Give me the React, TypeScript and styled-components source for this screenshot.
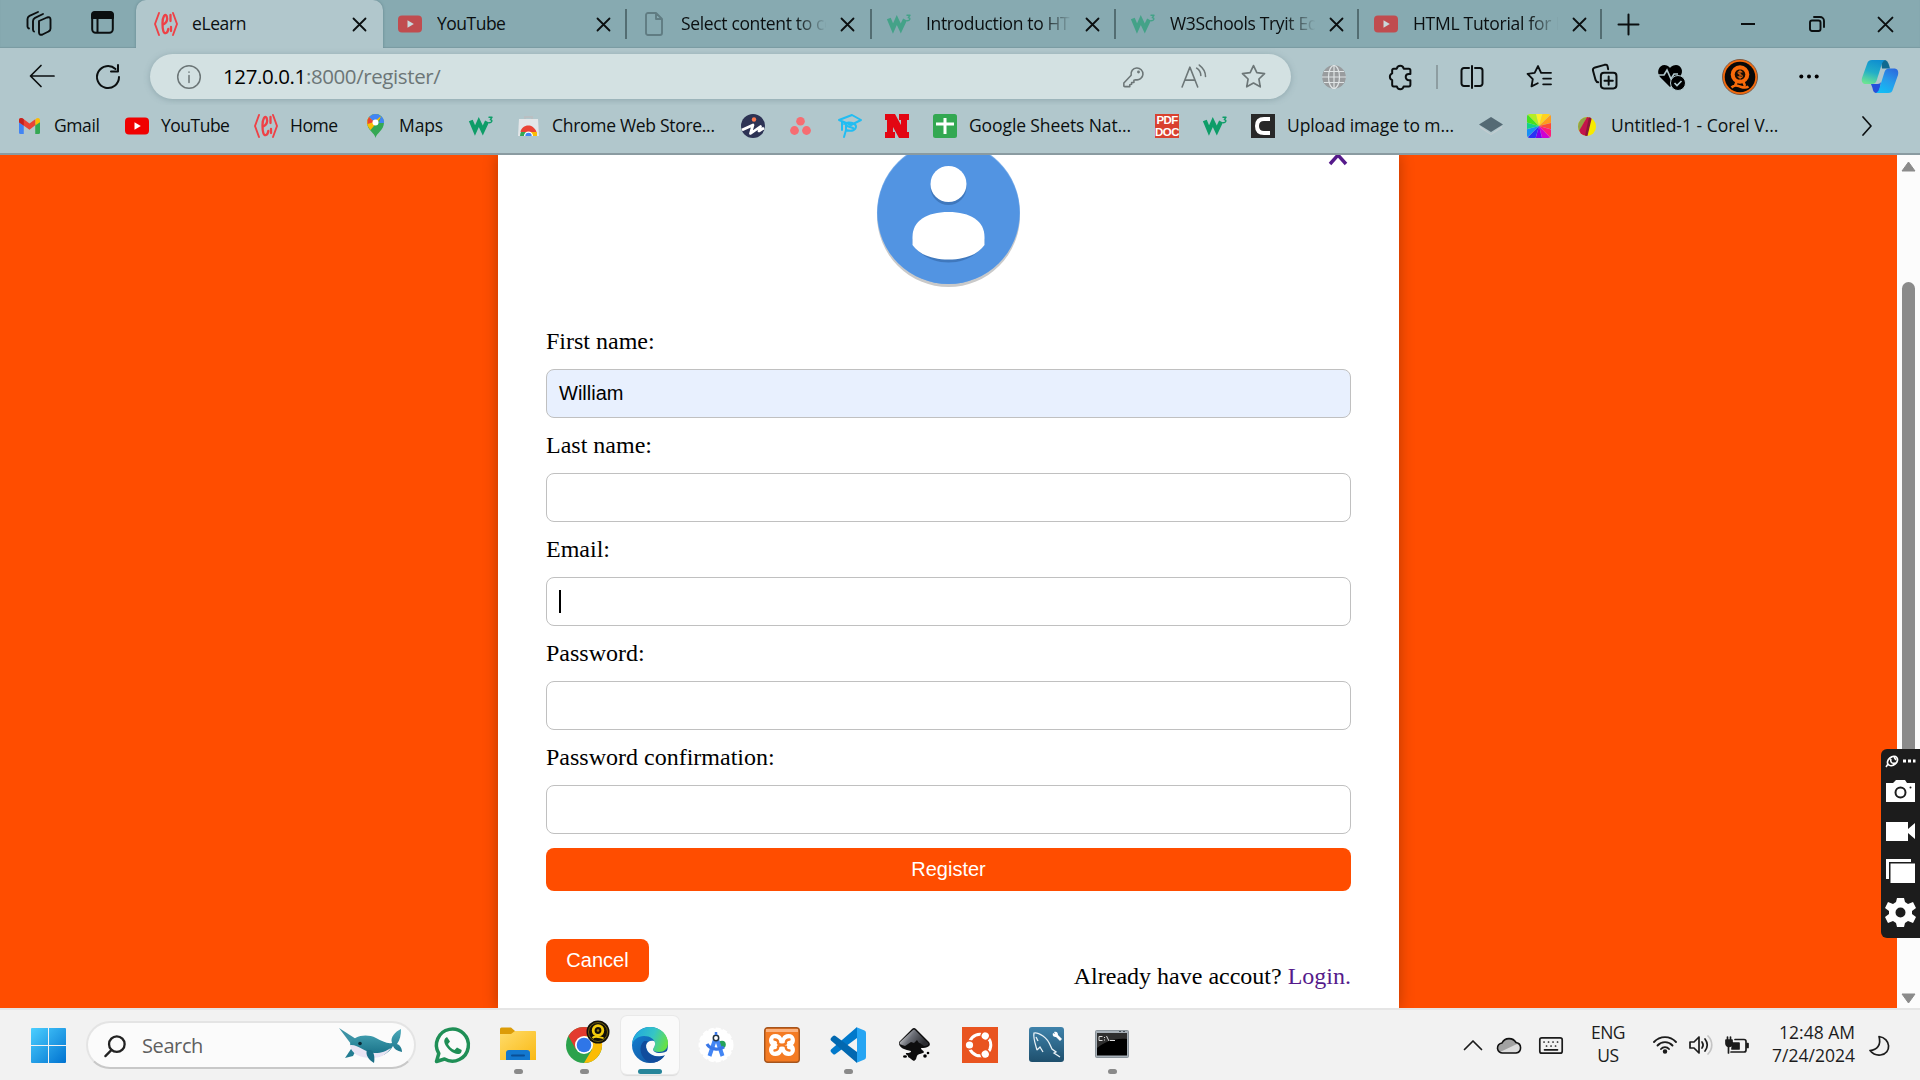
import React from 'react';
import styled, { createGlobalStyle } from 'styled-components';

const ui = '"Open Sans", "Noto Sans", sans-serif';

const GlobalStyle = createGlobalStyle`
  * { box-sizing: border-box; }
  body { margin: 0; background: #ff4d00; overflow: hidden; }
  svg { display: block; flex: none; overflow: visible; }
`;

const Screen = styled.div`
  width: 1920px;
  height: 1080px;
  display: flex;
  flex-direction: column;
  overflow: hidden;
  font-family: ${ui};
  color: #0b0f10;
`;

/* ---------- tab strip ---------- */
const TabStrip = styled.header`
  height: 48px;
  flex: none;
  display: flex;
  align-items: center;
  background: #87aab1;
  box-shadow: inset 0 -1px 1px #7b9ba2;
`;
const StripTools = styled.div`
  width: 136px;
  padding-left: 26px;
  display: flex;
  gap: 39px;
`;
const Tab = styled.div<{ $w: number; $active?: boolean }>`
  width: ${p => p.$w}px;
  height: 48px;
  display: flex;
  align-items: center;
  padding-left: ${p => (p.$active ? 18 : 15)}px;
  border-radius: 10px 10px 0 0;
  background: ${p => (p.$active ? '#b1c7cc' : 'transparent')};
  box-shadow: ${p => (p.$active ? '0 0 3px #62858d' : 'none')};
  clip-path: inset(-4px -4px 0 -4px);
`;
const TabIcon = styled.span<{ $dim?: boolean; $w?: number }>`
  width: ${p => p.$w ?? 39}px;
  flex: none;
  opacity: ${p => (p.$dim ? 0.55 : 1)};
`;
const TabTitle = styled.span<{ $w: number; $fade?: boolean; $ls?: number }>`
  width: ${p => p.$w}px;
  flex: none;
  overflow: hidden;
  white-space: nowrap;
  font-size: 17.5px;
  letter-spacing: ${p => p.$ls ?? -0.4}px;
  line-height: 28px;
  margin: -2px 13px 0 0;
  ${p => p.$fade && 'mask-image: linear-gradient(90deg, #000 78%, transparent 99%);'}
`;
const TabDivider = styled.i`
  width: 2px;
  height: 30px;
  margin-left: auto;
  background: #536d72;
`;
const WindowTools = styled.div`
  flex: 1;
  display: flex;
  align-items: center;
  padding: 0 27px 0 16px;
`;
const WindowButtons = styled.div`
  margin-left: auto;
  display: flex;
  align-items: center;
  gap: 53px;
`;

/* ---------- toolbar ---------- */
const Toolbar = styled.nav`
  height: 57px;
  flex: none;
  display: flex;
  align-items: center;
  background: #b1c7cc;
  padding: 0 16px 0 29px;
`;
const NavButtons = styled.div`
  width: 121px;
  flex: none;
  display: flex;
  gap: 40px;
`;
const AddressBar = styled.div`
  width: 1141px;
  flex: none;
  height: 45px;
  border-radius: 23px;
  background: #d3e1e2;
  box-shadow: 0 1px 6px rgba(80, 110, 118, 0.35);
  display: flex;
  align-items: center;
  padding: 0 25px 0 27px;
  color: #6c7677;
`;
const Url = styled.span`
  font-size: 20.5px;
  line-height: 28px;
  margin: -2px 0 0 22px;
  letter-spacing: -0.4px;
  b { font-weight: 400; color: #000; }
`;
const AddressTools = styled.div`
  margin-left: auto;
  display: flex;
  align-items: center;
  gap: 36px;
`;
const ToolSlots = styled.div`
  flex: 1;
  display: flex;
  align-items: center;
`;
const Slot = styled.span<{ $w: number }>`
  width: ${p => p.$w}px;
  flex: none;
  display: flex;
  justify-content: center;
`;
const ToolDivider = styled.i`
  width: 2px;
  height: 24px;
  background: #8d9da1;
`;

/* ---------- bookmarks ---------- */
const Bookmarks = styled.nav`
  height: 50px;
  flex: none;
  display: flex;
  align-items: center;
  padding: 0 0 6px 19px;
  background: #b1c7cc;
  border-bottom: 2px solid #8a9ba1;
`;
const Bookmark = styled.div<{ $w: number; $gap?: number }>`
  width: ${p => p.$w}px;
  flex: none;
  display: flex;
  align-items: center;
  gap: ${p => p.$gap ?? 12}px;
`;
const BookmarkText = styled.span<{ $ls?: number }>`
  font-size: 17.5px;
  line-height: 26px;
  margin-top: -2px;
  white-space: nowrap;
  letter-spacing: ${p => p.$ls ?? -0.2}px;
`;

/* ---------- web page ---------- */
const Viewport = styled.main`
  height: 853px;
  flex: none;
  display: flex;
  overflow: hidden;
  background: #ff4d00;
`;
const Backdrop = styled.div`
  width: 1897px;
  display: flex;
  justify-content: center;
`;
const Card = styled.section`
  width: 901px;
  height: 853px;
  padding: 0 48px;
  background: #fff;
  box-shadow: 0 0 14px rgba(0, 0, 0, 0.28);
  display: flex;
  flex-direction: column;
  font-family: "Liberation Serif", serif;
  font-size: 24px;
  color: #000;
`;
const CardTop = styled.div`
  height: 170px;
  display: grid;
  grid-template-columns: 1fr 143px 1fr;
`;
const CloseLink = styled.a`
  justify-self: end;
  margin-right: 3.5px;
`;
const Label = styled.label`
  height: 44px;
  line-height: 32px;
`;
const Field = styled.div<{ $filled?: boolean }>`
  height: 49px;
  margin-bottom: 11px;
  border: 1px solid #c0c0c0;
  border-radius: 8px;
  padding: 0 12px;
  display: flex;
  align-items: center;
  background: ${p => (p.$filled ? '#e8f0fe' : '#fff')};
  font-family: "Liberation Sans", sans-serif;
  font-size: 20px;
`;
const Caret = styled.i`
  width: 2px;
  height: 23px;
  background: #000;
`;
const Button = styled.button<{ $w: number; $top?: number }>`
  width: ${p => p.$w}px;
  height: 43px;
  margin: ${p => p.$top ?? 0}px 0 0;
  flex: none;
  border: 0;
  padding: 0;
  border-radius: 8px;
  background: #ff4d00;
  color: #fff;
  font-family: "Liberation Sans", sans-serif;
  font-size: 20px;
`;
const FormFooter = styled.div`
  display: flex;
  justify-content: space-between;
  align-items: flex-start;
  margin-top: 48px;
`;
const LoginNote = styled.p`
  margin: 23px 0 0;
  line-height: 28px;
  a { color: #551a8b; }
`;
const Scrollbar = styled.aside`
  width: 23px;
  background: #fcfcfc;
  display: flex;
  flex-direction: column;
  align-items: center;
  padding: 6px 0 4px;
`;
const Thumb = styled.div`
  width: 13px;
  height: 560px;
  margin: 110px 0 auto;
  border-radius: 7px;
  background: #8b8b8b;
`;
const Recorder = styled.div`
  position: absolute;
  left: 1881px;
  top: 749px;
  width: 39px;
  height: 189px;
  border-radius: 6px 0 0 6px;
  background: #1c1c1c;
`;

/* ---------- taskbar ---------- */
const Taskbar = styled.footer`
  height: 72px;
  flex: none;
  display: flex;
  align-items: center;
  background: #f2f2f2;
  border-top: 2px solid #e5e5e5;
  padding-left: 31px;
  color: #1c1c1c;
`;
const SearchBox = styled.div`
  width: 330px;
  height: 48px;
  margin: 0 7px 0 20px;
  border: 2px solid #e4e4e4;
  border-bottom-color: #c8c8c8;
  border-radius: 24px;
  background: #fbfbfb;
  display: flex;
  align-items: center;
  padding: 1px 12px 0 16px;
  font-size: 20px;
  letter-spacing: -0.4px;
  color: #5f5f5f;
  span { flex: 1; margin-left: 16px; line-height: 26px; }
`;
const AppTile = styled.div<{ $open?: boolean }>`
  width: 58px;
  height: 58px;
  margin-right: 8px;
  flex: none;
  border-radius: 6px;
  display: flex;
  flex-direction: column;
  align-items: center;
  justify-content: space-between;
  padding-top: 11px;
  background: ${p => (p.$open ? '#fafafa' : 'transparent')};
  box-shadow: ${p => (p.$open ? '0 0 0 1px #e9e9e9, 0 2px 1px #dcdcdc' : 'none')};
`;
const Running = styled.i<{ $wide?: boolean }>`
  width: ${p => (p.$wide ? 24 : 9)}px;
  height: 5px;
  border-radius: 3px;
  background: ${p => (p.$wide ? '#26859a' : '#8a8a8a')};
`;
const Tray = styled.div`
  margin-left: auto;
  padding-right: 16px;
  display: flex;
  align-items: center;
`;
const TrayText = styled.div<{ $w: number; $right?: boolean }>`
  width: ${p => p.$w}px;
  font-size: 17.5px;
  letter-spacing: ${p => (p.$right ? 0 : -0.5)}px;
  line-height: 23px;
  margin-top: -2px;
  text-align: ${p => (p.$right ? 'right' : 'center')};
`;

/* ---------- drawings ---------- */
type SvgProps = { w: number; h?: number; box?: string; sw?: number; color?: string; children: React.ReactNode };
const Line = ({ w, h = w, box = '0 0 24 24', sw = 1.7, color = 'currentColor', children }: SvgProps) => (
  <svg width={w} height={h} viewBox={box} fill="none" stroke={color} strokeWidth={sw} strokeLinecap="round" strokeLinejoin="round">{children}</svg>
);
const Art = ({ w, h = w, box = '0 0 24 24', children }: SvgProps) => (
  <svg width={w} height={h} viewBox={box}>{children}</svg>
);

const Cross = ({ s = 13, sw = 1.8 }) => <Line w={s} box="0 0 13 13" sw={sw}><path d="M.5.5l12 12M12.500.5l-12 12" /></Line>;
const Brand = () => (
  <Line w={24} sw={1.9} color="#ee4146">
    <path d="M5 1L1 12l4 11M19 1l4 11-4 11" />
    <path d="M8.500 13c4-2 5.500-5 4.200-9C11 1 8.500 5 8.500 11c0 7 1 11 3.500 10 1.500-.6 2-2 2.300-4M16.500 3v6M17 15v4" strokeWidth="2.300" />
  </Line>
);
const YouTube = () => (
  <Art w={24} h={18} box="0 0 24 17"><rect width="24" height="17" rx="4" fill="#f00000" /><path d="M9.500 4.800v7.400l6.300-3.700z" fill="#fff" /></Art>
);
const W3 = () => (
  <Line w={24} h={20} box="0 0 24 20" sw={4.200} color="#0e9d68">
    <path d="M1.800 4.500l4.200 10 3.800-8.500 4 8.500 4.200-9" strokeLinejoin="miter" strokeLinecap="butt" />
    <path d="M20 1.300h3L21.300 3.600c2.500.2 2 3.600-1.500 3" strokeWidth="1.400" />
  </Line>
);
const Gmail = () => (
  <Art w={21} h={18} box="0 0 22 17">
    <path d="M0 3v12.500A1.500 1.500 0 001.500 17H5V7z" fill="#4285f4" /><path d="M22 3v12.500a1.500 1.500 0 01-1.500 1.500H17V7z" fill="#34a853" />
    <path d="M17 2v6l5-3.500V2.500C22 0 19.500-.5 18 .7z" fill="#fbbc04" /><path d="M0 2.500C0 0 2.500-.5 4 .7l7 5.300 6-4.600v6.400l-6 4.700L0 4.500z" fill="#ea4335" />
    <path d="M0 2.500C0 0 2.500-.5 4 .7L5 1.500V8L0 4.500z" fill="#c5221f" />
  </Art>
);
const MapPin = () => (
  <Art w={17} h={24} box="0 0 17 24">
    <path d="M8.500 24C8 19 0 16 0 8.500A8.500 8.500 0 0117 8.500C17 16 9.500 19 8.500 24z" fill="#34a853" />
    <path d="M0 8.500C0 12 2 14 3.500 16L14.500 3A8.500 8.500 0 000 8.500z" fill="#fbbc04" />
    <path d="M2 3L7 8l7-6A8.500 8.500 0 002 3z" fill="#4285f4" /><path d="M2 3a8.500 8.500 0 00-1.500 7L7 8z" fill="#ea4335" />
    <path d="M14 2a8.500 8.500 0 013 7l-5 0z" fill="#4285f4" /><circle cx="8.500" cy="8.500" r="3" fill="#fff" />
  </Art>
);
const WebStore = () => (
  <Art w={23} h={23} box="0 0 23 23">
    <path d="M8 5V2h7v3" fill="none" stroke="#b9bfc2" strokeWidth="2" /><path d="M2 4h19l1 17H1z" fill="#e3e6e8" />
    <path d="M3 21a8.500 8.500 0 0117 0z" fill="#34a853" /><path d="M3.500 17c1-7 12-10 16 0z" fill="#ea4335" /><path d="M11 17h9v4h-9z" fill="#fbbc04" />
    <path d="M7 21a4.500 4.500 0 019 0z" fill="#fff" /><path d="M8.300 21a3.200 3.200 0 016.400 0z" fill="#4285f4" />
  </Art>
);
const Invideo = () => (
  <Art w={24}><circle cx="12" cy="12" r="12" fill="#2d3354" /><circle cx="13" cy="5.500" r="2.200" fill="#ff7b4f" /><path d="M1 16l11-5-2.500 8.500 10-7-1.500 4.500 5-3" fill="none" stroke="#fff" strokeWidth="2.700" strokeLinejoin="round" /></Art>
);
const Asana = () => (
  <Art w={21} h={18} box="0 0 21 18"><g fill="#f66d72"><circle cx="10.500" cy="4.300" r="4.300" /><circle cx="4.500" cy="13.500" r="4.400" /><circle cx="16.500" cy="13.500" r="4.400" /></g></Art>
);
const Graduate = () => (
  <Line w={24} sw={2} color="#22bdf2"><path d="M1 6l13-5 9 5-10 5zM4 8v8M6 10c4-3 11-1 12 2 0 4-4 6-10 4v-5M8 16l-2 7M9 12l6 2" /></Line>
);
const Husker = () => (
  <Art w={24}><path d="M0 0h10l6 11V6h-2V0h10v6h-2v12h2v6H14l-6-11v5h2v6H0v-6h2V6H0z" fill="#e30613" /></Art>
);
const Sheets = () => (
  <Art w={24}><rect width="24" height="24" rx="2.500" fill="#33a852" /><path d="M12 4v16M3 10h18" stroke="#fff" strokeWidth="3" /></Art>
);
const PdfTile = styled.span`
  width: 24px;
  height: 24px;
  padding-top: 1px;
  display: grid;
  flex: none;
  overflow: hidden;
  background: #d9412f;
  color: #fff;
  font: 700 11.5px/11px "Liberation Sans", sans-serif;
  letter-spacing: -0.6px;
  text-align: center;
`;
const CTile = () => (
  <Art w={24}><rect width="24" height="24" fill="#282828" /><path d="M19 5h-6C8 5 6 8 6 12s2 7 7 7h6" fill="none" stroke="#fff" strokeWidth="4" /></Art>
);
const Layers = () => (
  <Art w={24} h={18} box="0 0 24 18"><path d="M1 9l11 8 11-8v2l-11 7L1 11z" fill="#c4cdd1" /><path d="M0 7.500L12 0l12 7.500L12 15z" fill="#556a74" /></Art>
);
const wheel = ['#fff02a', '#ffd21c', '#ff9a1f', '#ff4b36', '#ff1c78', '#cf00d2', '#7a00ef', '#2a31f5', '#168ff5', '#12d386', '#43e21f', '#b5ee22'];
const Rainbow = () => (
  <Art w={24}>
    <defs><clipPath id="wheel"><rect width="24" height="24" rx="3" /></clipPath></defs>
    <g clipPath="url(#wheel)">{wheel.map((c, i) => <path key={c} d="M12 12L6.500-10h11.500z" fill={c} transform={`rotate(${i * 30} 12 12)`} />)}</g>
  </Art>
);
const Corel = () => (
  <Art w={18} h={19} box="0 0 18 19">
    <defs><clipPath id="balloon"><ellipse cx="9" cy="9.500" rx="9" ry="9.500" /></clipPath></defs>
    <g clipPath="url(#balloon)">
      <path d="M0 0h18v19H0z" fill="#f8ea00" /><path d="M0 0h9L2 13 0 14z" fill="#8fa34a" /><path d="M9 0h4L8.500 19H3L1 14z" fill="#c3144b" />
      <path d="M11 0h3L9.500 19H7z" fill="#8a1738" />
    </g>
  </Art>
);

const Globe = () => (
  <Art w={24}>
    <circle cx="12" cy="12" r="11.800" fill="#999c9e" />
    <g fill="none" stroke="#dfe4e5" strokeWidth="1.200"><ellipse cx="12" cy="12" rx="5.500" ry="11.500" /><path d="M12 0v24M0 12h24M2 6.500h20M2 17.500h20" /></g>
  </Art>
);
const QAvatar = () => (
  <Art w={36} box="0 0 36 36">
    <circle cx="18" cy="18" r="17.500" fill="#f96a0a" stroke="#7c5a45" /><circle cx="18" cy="18" r="15.300" fill="#080808" />
    <circle cx="18" cy="15.500" r="9.300" fill="#f96a0a" />
    <path d="M9.500 28.500c3-3 5.500-2 8.500-1s5.500 2 8.500 0M14.500 23l-1.500 4M21.500 23l1.500 4" fill="none" stroke="#f96a0a" strokeWidth="2.600" />
    <circle cx="18" cy="15.500" r="5.300" fill="#1a0d04" />
    <path d="M20.300 13.500c-1.500-1.800-4.600-1.200-4.200.6s4.500 1.200 4.200 3.200-3.500 1.600-4.600 0M18 10.500v10" fill="none" stroke="#e0640f" strokeWidth="1.100" />
  </Art>
);
const Copilot = () => (
  <Art w={36} h={33} box="0 0 36 33">
    <defs>
      <linearGradient id="cpA" x1=".6" y1="0" x2=".3" y2="1"><stop stopColor="#0f8fd0" /><stop offset=".5" stopColor="#22aec8" /><stop offset="1" stopColor="#6be492" /></linearGradient>
      <linearGradient id="cpB" x1=".8" y1="0" x2=".3" y2="1"><stop stopColor="#2b6bde" /><stop offset=".5" stopColor="#279bea" /><stop offset="1" stopColor="#12bdf5" /></linearGradient>
    </defs>
    <path d="M19 0h3c3 0 4 2 5 5l1 3.500h-8z" fill="#106a90" />
    <path d="M10 0h13c-2 1-3 3-3.500 5l-5 16c-.8 2-2 3-4.500 3H4c-3 0-5-2-4-6L5 4c1-3 2-4 5-4z" fill="url(#cpA)" />
    <path d="M9 24h5c2 0 4 0 5-2l-2 11h-2c-3 0-4-2-4.500-5z" fill="#2550dc" />
    <path d="M26 33H14c2-1 3-3 3.500-5l5-16c.8-2 2-3.500 4.500-3.500h5c3 0 5 2 4 6.500l-5 14c-1 3-2 4-5 4z" fill="url(#cpB)" />
  </Art>
);
const Star = "M12 1.500l3.200 6.800 7.400 1-5.400 5.100 1.300 7.500L12 18.300l-6.500 3.600 1.300-7.500L1.400 9.300l7.400-1z";

const Portrait = () => (
  <svg width="143" height="132" viewBox="0 14 143 132">
    <circle cx="71.500" cy="74.500" r="71.500" fill="#c9c9c9" /><circle cx="71.500" cy="71.500" r="71.500" fill="#7aaeea" /><circle cx="71.500" cy="72" r="71" fill="#5294e2" />
    <g fill="#3f78bd"><circle cx="71.500" cy="46" r="18" /><path d="M35.500 98v5c7 11 20 18.500 36 18.500s29-7.500 36-18.500v-5z" /></g>
    <g fill="#fff"><circle cx="71.500" cy="43" r="18" /><path d="M35.500 96c0-16 14-25 36-25s36 9 36 25v8c-6 9-19 14.500-36 14.500S41.500 113 35.500 104z" /></g>
  </svg>
);

const RecorderIcons = () => (
  <svg width="39" height="189" viewBox="0 0 39 189" fill="#fff">
    <path d="M5 18l2-3" stroke="#fff" strokeWidth="1.500" /><ellipse cx="11.500" cy="12" rx="5.500" ry="4" transform="rotate(-40 11.500 12)" fill="none" stroke="#fff" strokeWidth="1.800" />
    <path d="M10 10c-1 3 1 5 4 4M13 8l2 3" fill="none" stroke="#fff" strokeWidth="1.600" />
    <path d="M22 10.500h3v3h-3zM27 10.500h3v3h-3zM32 10.500h2.500v3H32z" />
    <path d="M5 34h7l3-3h9l2 3h8v19H5z" /><circle cx="19.500" cy="43.500" r="5" fill="none" stroke="#1c1c1c" strokeWidth="2" /><circle cx="29.500" cy="38.500" r="1" fill="#1c1c1c" />
    <path d="M5 73h22v7l7-6v16l-7-6v8H5z" />
    <path d="M5 110h25v3H8v17H5z" /><path d="M9.500 114.500H34V134H9.500z" />
    <path transform="translate(0 -1.500)" fillRule="evenodd" d="M16 150.500h7l1 4 3 2 5-2 3 6-4 3v3l4 3-3 6-5-2-3 2-1 4h-7l-1-4-3-2-5 2-3-6 4-3v-3l-4-3 3-6 5 2 3-2zm3.500 9.500a5 5 0 100 10 5 5 0 000-10z" />
  </svg>
);

const WindowsLogo = () => (
  <Art w={35} box="0 0 35 35">
    <defs><linearGradient id="win" x1="0" y1="0" x2="1" y2="1"><stop stopColor="#4ccfff" /><stop offset="1" stopColor="#0072d0" /></linearGradient></defs>
    <path d="M1 0h16v17H0V1a1 1 0 011-1zM18 0h16a1 1 0 011 1v16H18zM0 18h17v17H1a1 1 0 01-1-1zM18 18h17v16a1 1 0 01-1 1H18z" fill="url(#win)" />
  </Art>
);
const Narwhal = () => (
  <Art w={63} h={35} box="0 0 63 35">
    <defs><linearGradient id="nar" x1="0" y1="0" x2="0" y2="1"><stop stopColor="#4ba9b9" /><stop offset="1" stopColor="#146c83" /></linearGradient></defs>
    <path d="M0 0l17 11-5 5z" fill="#3c92a5" /><path d="M12 21l-6 9 8-2 3-6z" fill="#237d92" />
    <path d="M11 16C14 8 27 5 37 10c6 3 11 6 16 5-2-6 3-11 9-14 0 6-1 11-4 15 3 1 5 4 5 8-5-1-8-3-9-6-4 7-11 11-20 11-11 0-20-3-23-13z" fill="url(#nar)" />
    <path d="M11 17c8-1 15 8 25 8 7 0 11-2 16-5-5 7-11 10-19 10-12 0-21-4-22-13z" fill="#e9e4f3" />
    <path d="M28 22c-2 5 2 10 7 13 1-6 0-11-3-13z" fill="#1b6f86" /><circle cx="21" cy="15.500" r="1.800" fill="#0b2a35" />
  </Art>
);
const WhatsApp = () => (
  <Art w={37} box="0 0 37 37">
    <path d="M2.500 34.500l2.300-8A16 16 0 1110.500 32z" fill="#fafafa" stroke="#1f8f56" strokeWidth="3.500" strokeLinejoin="round" />
    <path d="M13 10c-6 3-1 10 3 13.500 4.500 4 10.500 5 11.500 1l.2-1.500-4.700-2.500-2.500 2.500c-3-1-5.500-3.500-6.500-6l2-2.500z" fill="#1f8f56" />
  </Art>
);
const Folder = () => (
  <Art w={36} h={34} box="0 0 36 34">
    <defs><linearGradient id="fold" x1="0" y1="0" x2="1" y2="1"><stop stopColor="#ffdc6b" /><stop offset="1" stopColor="#f9b914" /></linearGradient></defs>
    <path d="M0 2a1.500 1.500 0 011.500-1.500H11l4 3.500h19v8H0z" fill="#dc9c08" /><path d="M0 7h11l4-3h20a1 1 0 011 1v28H0z" fill="url(#fold)" />
    <path d="M6 33V26a3 3 0 013-3h18a3 3 0 013 3v7z" fill="#1378cf" /><path d="M12 28.500h12" stroke="#0a4f96" strokeWidth="2" strokeLinecap="round" />
  </Art>
);
const Chrome = () => (
  <svg width="36" height="36" viewBox="0 0 36 36">
    <circle cx="18" cy="18" r="18" fill="#2ba24c" /><path d="M2.400 9a18 18 0 0131.200 0H18L10 22.500z" fill="#e33b2e" />
    <path d="M33.600 9H18l8 13.500L18 36A18 18 0 0033.600 9z" fill="#fbbc05" />
    <circle cx="18" cy="18" r="9" fill="#fff" /><circle cx="18" cy="18" r="7.300" fill="#2f76e8" />
    <circle cx="32" cy="5" r="11.500" fill="#11100a" /><circle cx="32" cy="5" r="9.500" fill="none" stroke="#6e5f0f" strokeWidth="1" />
    <circle cx="32" cy="3.500" r="4.800" fill="none" stroke="#f2cb0d" strokeWidth="2.800" /><path d="M26.500 11c3-3 8 0 11 0" fill="none" stroke="#f2cb0d" strokeWidth="2" /><circle cx="32" cy="3.500" r="1.300" fill="#8e780c" />
  </svg>
);
const Edge = () => (
  <Art w={36} box="0 0 36 36">
    <defs>
      <linearGradient id="edA" x1="0" y1=".3" x2="1" y2=".6"><stop stopColor="#1fa7e0" /><stop offset=".55" stopColor="#36c5c5" /><stop offset="1" stopColor="#67e241" /></linearGradient>
      <linearGradient id="edB" x1="0" y1="0" x2="1" y2="1"><stop stopColor="#1384d8" /><stop offset="1" stopColor="#124a92" /></linearGradient>
    </defs>
    <circle cx="18" cy="18" r="18" fill="url(#edB)" />
    <path d="M0 18C1 7 9 0 18 0c11 0 18 8 18 16 0 6-4 9-9 9-4 0-6-1-6-3 0-1 2-2 2-5 0-5-5-8-11-8C6 9 1 13 0 18z" fill="url(#edA)" />
    <path d="M14 18c1-3 4-5 8-4 2 2 1 5-1 8 0 2 2 4 7 4 3 0 6-1 9-3l1 3c-2 3-5 3-6 3-9 2-18-2-18-11z" fill="#fafafa" />
    <path d="M12 14c-6 5-4 16 4 21 7 2 13-1 17-7-7 3-17 2-19-7 0-3 0-5 2-7z" fill="#104c9c" />
  </Art>
);
const AndroidStudio = () => (
  <Art w={36} box="0 0 36 36">
    <circle cx="18" cy="18" r="16.500" fill="#fff" stroke="#fff" strokeWidth="2" strokeDasharray="5 2" /><circle cx="24" cy="17.500" r="3.800" fill="#25a35a" />
    <path d="M17.500 11l-6 18M18.500 11l6 18" stroke="#4285f4" strokeWidth="4" /><path d="M9 17c3 5.500 12 6.500 17 3" fill="none" stroke="#3977e8" strokeWidth="3.200" />
    <circle cx="18" cy="11" r="2.700" fill="#fff" stroke="#243340" strokeWidth="1.500" /><path d="M18 5v3" stroke="#3977e8" strokeWidth="2.500" />
  </Art>
);
const Xampp = () => (
  <Art w={36} box="0 0 36 36">
    <rect x=".7" y=".7" width="34.600" height="34.600" rx="3" fill="#f47b23" stroke="#a6551d" strokeWidth="1.400" /><path d="M2 2h32v3H2z" fill="#fbb27e" />
    <path d="M11.500 7c3 0 5 1 6.500 4 1.500-3 3.500-4 6.500-4 7 0 8 8 4.500 11 3.500 3 2.500 11-4.500 11-3 0-5-1-6.500-4-1.500 3-3.500 4-6.500 4C4.500 29 3.500 21 7 18 3.500 15 4.500 7 11.500 7z" fill="#fff" />
    <path d="M10.500 12.500c2.500 0 3.500 1 3.700 3M10.500 23.500c2.500 0 3.500-1 3.700-3M25.500 12.500c-2.500 0-3.500 1-3.700 3M25.500 23.500c-2.500 0-3.500-1-3.700-3M14 16.500c2 1.500 6 1.500 8 0M14 19.500c2-1.500 6-1.500 8 0" fill="none" stroke="#f47b23" strokeWidth="2.400" strokeLinecap="round" />
  </Art>
);
const VsCode = () => (
  <Art w={36} box="0 0 36 36">
    <path d="M27 0L1 22.500a2 2 0 000 2.500l2 2a2 2 0 002.500 0L27 11z" fill="#0179cb" /><path d="M27 36L1 13.500a2 2 0 010-2.500l2-2a2 2 0 012.500 0L27 25z" fill="#0268b0" />
    <path d="M26 0l8.500 3.500A2.500 2.500 0 0136 6v24a2.500 2.500 0 01-1.500 2.500L26 36c1 0 1-1 1-2V2c0-1 0-2-1-2z" fill="#26a5f3" />
  </Art>
);
const Inkscape = () => (
  <Art w={34} h={36} box="0 0 34 36">
    <defs><linearGradient id="ink" x1="0" y1="0" x2="1" y2=".4"><stop stopColor="#fff" /><stop offset=".5" stopColor="#6d7078" /><stop offset="1" stopColor="#2a2b30" /></linearGradient></defs>
    <path d="M15 2a3 3 0 014 0l13 13c3 4-2 6-8 6 0 2 2 2 3 4 0 2-6 1-7 4-1 2 0 3-3 5-3-1-3-3-6-4 1-2-3-2-2-4 2 0 5 0 5-2-5-1-13-3-12-9z" fill="#0d0d0e" />
    <path d="M16 3a1.500 1.500 0 012 0l13 13c1 2-1 3-4 3-2-1-3-3-5-3l-2-3-3 3-3-1-6 4c-3-1-7-2-5-4z" fill="url(#ink)" />
    <ellipse cx="8" cy="29.500" rx="2" ry="1.200" /><circle cx="28" cy="29" r="1.800" /><circle cx="31" cy="26" r="1.300" />
  </Art>
);
const Ubuntu = () => (
  <Art w={36} box="0 0 36 36"><rect width="36" height="36" fill="#e95420" /><circle cx="18" cy="18" r="10.800" fill="none" stroke="#fff" strokeWidth="3" />
    {[0, 120, 240].map(a => <g key={a} transform={`rotate(${a} 18 18)`}><circle cx="7.500" cy="18" r="5" fill="#e95420" /><circle cx="7.500" cy="18" r="3.600" fill="#fff" /></g>)}
  </Art>
);
const MySql = () => (
  <Art w={35} box="0 0 35 35">
    <defs><linearGradient id="sql" x1="0" y1="0" x2="0" y2="1"><stop stopColor="#3f83ab" /><stop offset="1" stopColor="#1e4f6d" /></linearGradient></defs>
    <rect width="35" height="35" rx="3" fill="url(#sql)" />
    <path d="M8 23C6 16 4 11 5 6c3-1 6 1 9 3 6 4 7 9 9 13l4 3-2 1 6 4M8 23l3-3 3 5M9 14l-2-4" fill="none" stroke="#e8f1f6" strokeWidth="1.300" />
    <path d="M25 5c3-1 4 1 4 3l4 4-2 2-4-4c-2 0-4-1-3-4l2 1z" fill="#fff" />
  </Art>
);
const Terminal = () => (
  <Art w={34} h={34} box="0 -3 34 34"><rect x=".5" y=".5" width="33" height="27" rx="1" fill="#a7b0b8" stroke="#8a939a" /><path d="M2 3h30v22.500H2z" fill="#000" /><path d="M2 3h30v6c-14-1-22 3-30 9z" fill="#2f2f2f" />
    <path d="M7.500 6.500H4v4h3.500M9.500 7v1M9.500 9.500v1M11.500 6l2.500 5M15 10.500h5" fill="none" stroke="#ddd" />
    <path d="M24 1.500h2M28 1.500h2" stroke="#49525a" /></Art>
);

type Mark = { w: number; icon: React.ReactNode; text?: string; ls?: number; gap?: number };
const marks: Mark[] = [
  { w: 106, icon: <Gmail />, text: 'Gmail', ls: -0.4, gap: 14 },
  { w: 129, icon: <YouTube />, text: 'YouTube', ls: -0.5 },
  { w: 113, icon: <Brand />, text: 'Home', ls: -0.5 },
  { w: 102, icon: <MapPin />, text: 'Maps', gap: 15, ls: -0.1 },
  { w: 48, icon: <W3 /> },
  { w: 224, icon: <WebStore />, text: 'Chrome Web Store...', ls: -0.3 },
  { w: 49, icon: <Invideo /> },
  { w: 48, icon: <Asana /> },
  { w: 47, icon: <Graduate /> },
  { w: 48, icon: <Husker /> },
  { w: 222, icon: <Sheets />, text: 'Google Sheets Nat...', ls: -0.1 },
  { w: 48, icon: <PdfTile><span>PDF</span><span>DOC</span></PdfTile> },
  { w: 48, icon: <W3 /> },
  { w: 228, icon: <CTile />, text: 'Upload image to m...', ls: -0.1 },
  { w: 48, icon: <Layers /> },
  { w: 51, icon: <Rainbow /> },
  { w: 284, icon: <Corel />, text: 'Untitled-1 - Corel V...', ls: 0, gap: 15 },
];

const DocIcon = () => <Line w={18} h={24} box="0 0 18 24" color="#41575c" sw={1.900}><path d="M3 1h8l6 6v14a2 2 0 01-2 2H3a2 2 0 01-2-2V3a2 2 0 012-2zM11 1v6h6" /></Line>;
const tabs: { w: number; icon: React.ReactNode; text: string; ls?: number; fade?: boolean }[] = [
  { w: 244, icon: <YouTube />, text: 'YouTube', ls: -0.5 },
  { w: 245, icon: <DocIcon />, text: 'Select content to co', fade: true },
  { w: 244, icon: <W3 />, text: 'Introduction to HTM', fade: true },
  { w: 243, icon: <W3 />, text: 'W3Schools Tryit Edi', fade: true },
  { w: 243, icon: <YouTube />, text: 'HTML Tutorial for Be', fade: true, ls: -0.28 },
];

const apps: { icon: React.ReactNode; run?: boolean; open?: boolean }[] = [
  { icon: <WhatsApp /> }, { icon: <Folder />, run: true }, { icon: <Chrome />, run: true }, { icon: <Edge />, run: true, open: true },
  { icon: <AndroidStudio /> }, { icon: <Xampp /> }, { icon: <VsCode />, run: true }, { icon: <Inkscape /> }, { icon: <Ubuntu /> },
  { icon: <MySql /> }, { icon: <Terminal />, run: true },
];

const fields = ['First name:', 'Last name:', 'Email:', 'Password:', 'Password confirmation:'];

export default function App() {
  return (
    <Screen>
      <GlobalStyle />
      <TabStrip>
        <StripTools>
          <Line w={26} box="0 0 26 26" sw={1.900}><path d="M13 10l8-3.500c2-.8 3.500 0 3.500 2v9c0 1.500-.7 2.500-2 3l-6 3c-2 .8-3.500 0-3.500-2zM8 20.500c-.8-.4-1-1-1-2V10c0-1.500.7-2.500 2-3.200L17 3M3 17.500c-1-.4-1.500-1-1.500-2V8c0-1.500.7-2.500 2-3.200L12 1" /></Line>
          <Line w={23} box="0 0 23 23" sw={2}><rect x="1.200" y="1.200" width="20.600" height="20.600" rx="3.500" /><path d="M1 4a3 3 0 013-3h15a3 3 0 013 3v3H1z" fill="currentColor" /><path d="M6.500 7v14" /></Line>
        </StripTools>
        <Tab $w={247} $active>
          <TabIcon $w={38}><Brand /></TabIcon><TabTitle $w={148}>eLearn</TabTitle><Cross />
        </Tab>
        {tabs.map((t, i) => (
          <Tab key={i} $w={t.w}>
            <TabIcon $dim><Slot $w={24}>{t.icon}</Slot></TabIcon><TabTitle $w={147} $fade={t.fade} $ls={t.ls ?? -0.35}>{t.text}</TabTitle><Cross /><TabDivider />
          </Tab>
        ))}
        <WindowTools>
          <Line w={21} box="0 0 21 21" sw={2}><path d="M10.500.5v20M.5 10.500h20" /></Line>
          <WindowButtons>
            <Line w={16} h={16} box="0 0 16 16" sw={2}><path d="M1 8h14" strokeLinecap="butt" /></Line>
            <Line w={16} box="0 0 16 16" sw={1.900}><rect x="1" y="4.500" width="10.500" height="10.500" rx="2" /><path d="M5 1h6a4 4 0 014 4v6" /></Line>
            <Cross s={15} sw={1.700} />
          </WindowButtons>
        </WindowTools>
      </TabStrip>

      <Toolbar>
        <NavButtons>
          <Line w={26} box="0 0 26 24" h={24}><path d="M25 12H2M12 1.500L1.500 12 12 22.500" /></Line>
          <Line w={26} box="0 0 26 26" sw={2}><path d="M24 13a11 11 0 11-3.500-8M23 1v6.500h-7" /></Line>
        </NavButtons>
        <AddressBar>
          <Line w={24} sw={1.500}><circle cx="12" cy="12" r="11.300" /><path d="M12 10.500v7M12 7v.2" /></Line>
          <Url><b>127.0.0.1</b>:8000/register/</Url>
          <AddressTools>
            <Line w={22} sw={1.700}><path d="M10 10a6.500 6.500 0 115 5l-2 .5v2.500h-2.500V20l-2 .5v2H3a1 1 0 01-1-1V18.500z" /><circle cx="18" cy="6.500" r=".7" /></Line>
            <Line w={25} sw={1.500}><path d="M2 22L9.500 3 17 22M5 15.500h9M16 4c3 2 4 4 4 7M18.500 1c4 3 6 6 6 11" /></Line>
            <Line w={25} sw={1.600}><path d={Star} /></Line>
          </AddressTools>
        </AddressBar>
        <ToolSlots>
          <Slot $w={85}><Globe /></Slot>
          <Slot $w={48}><Line w={25} sw={1.900}><path d="M8.500 4.500a3.300 3.300 0 016.500 0h5a1.500 1.500 0 011.500 1.500v3.500h-1.500a3 3 0 000 6h1.500V20a1.500 1.500 0 01-1.500 1.500h-5a3.300 3.300 0 01-6.500 0H5.500A1.500 1.500 0 014 20v-4.500a3.500 3.500 0 010-6.500V6a1.500 1.500 0 011.500-1.500z" /></Line></Slot>
          <Slot $w={26}><ToolDivider /></Slot>
          <Slot $w={44}><Line w={24} sw={2}><path d="M9 3H4a2.500 2.500 0 00-2.500 2.500v13A2.500 2.500 0 004 21h5M15 3h5a2.500 2.500 0 012.500 2.500v13A2.500 2.500 0 0120 21h-5M12 1v22" /></Line></Slot>
          <Slot $w={88}><Line w={25} sw={1.800}><path d="M17 8.500h-2.500L11.500 2 8.300 8.500 1.500 9.500l5 5-1.200 7 6-3M16.500 8.500H24M16.500 14H24M16.500 19.500H24" /></Line></Slot>
          <Slot $w={44}><Line w={25} sw={1.900}><rect x="8.500" y="8.500" width="15" height="15" rx="3" /><path d="M16 12v8M12 16h8M6 17.500c-1.500 0-2-.5-2.500-2L1 6.500C.5 4.800 1 4 3 3.300l9-2.500c2-.5 2.700 0 3 1.700l.5 2.500" /></Line></Slot>
          <Slot $w={91}>
            <Art w={27} h={26} box="0 0 27 26"><path d="M12 23L2 13C-2 8 1 1 6.500 1 10 1 12 4 12 4s2-3 6-3c5 0 8 6 4.500 11z" fill="#000" /><path d="M0 11h6l3-5 4 9 3-5h4" fill="none" stroke="#b1c7cc" strokeWidth="1.700" /><circle cx="20" cy="19" r="7.500" fill="#000" stroke="#b1c7cc" /><path d="M16.500 19l2.500 2.500 4.500-4.500" fill="none" stroke="#b1c7cc" strokeWidth="1.700" /></Art>
          </Slot>
          <Slot $w={46}><QAvatar /></Slot>
          <Slot $w={92}><Art w={20} h={5} box="0 0 20 5"><circle cx="2.300" cy="2.500" r="2" /><circle cx="10" cy="2.500" r="2" /><circle cx="17.700" cy="2.500" r="2" /></Art></Slot>
          <Slot $w={50}><Copilot /></Slot>
        </ToolSlots>
      </Toolbar>

      <Bookmarks>
        {marks.map((m, i) => (
          <Bookmark key={i} $w={m.w} $gap={m.gap}>{m.icon}{m.text && <BookmarkText $ls={m.ls}>{m.text}</BookmarkText>}</Bookmark>
        ))}
        <Line w={10} h={20} box="0 0 10 20"><path d="M1 1l8 9-8 9" /></Line>
      </Bookmarks>

      <Viewport>
        <Backdrop>
          <Card>
            <CardTop>
              <span />
              <Portrait />
              <CloseLink><Line w={20} h={10} box="0 0 20 10" sw={3.400} color="#551a8b"><path d="M2 9L10 0 18 9" strokeLinecap="butt" strokeLinejoin="miter" /></Line></CloseLink>
            </CardTop>
            {fields.map((f, i) => (
              <React.Fragment key={f}>
                <Label>{f}</Label>
                <Field $filled={i === 0}>{i === 0 && 'William'}{i === 2 && <Caret />}</Field>
              </React.Fragment>
            ))}
            <Button $w={805} $top={3}>Register</Button>
            <FormFooter>
              <Button $w={103}>Cancel</Button>
              <LoginNote>Already have accout? <a>Login.</a></LoginNote>
            </FormFooter>
          </Card>
        </Backdrop>
        <Scrollbar>
          <Art w={15} h={11} box="0 0 15 11"><path d="M7.500 1L14 10H1z" fill="#8b8b8b" stroke="#8b8b8b" strokeLinejoin="round" /></Art>
          <Thumb />
          <Art w={15} h={11} box="0 0 15 11"><path d="M7.500 10L14 1H1z" fill="#8b8b8b" stroke="#8b8b8b" strokeLinejoin="round" /></Art>
        </Scrollbar>
      </Viewport>
      <Recorder><RecorderIcons /></Recorder>

      <Taskbar>
        <WindowsLogo />
        <SearchBox>
          <Line w={22} sw={2.500} color="#222"><circle cx="14" cy="10" r="8.500" /><path d="M8 16.500l-6.500 6.500" /></Line>
          <span>Search</span>
          <Narwhal />
        </SearchBox>
        {apps.map((a, i) => (
          <AppTile key={i} $open={a.open}>{a.icon}{a.run && <Running $wide={a.open} />}</AppTile>
        ))}
        <Tray>
          <Slot $w={36}><Line w={18} h={10} box="0 0 18 10"><path d="M.5 9.500L9 1l8.500 8.500" /></Line></Slot>
          <Slot $w={36}><Art w={24} h={18} box="0 0 24 18"><path d="M6 17a5 5 0 01-1-10A8 8 0 0119 6.500 5.300 5.300 0 0119 17z" fill="#a2a2a2" /><path d="M3 16L20 8c5 2 4 9-1 9H6z" fill="#dcdcdc" /><path d="M6 17a5 5 0 01-1-10A8 8 0 0119 6.500 5.300 5.300 0 0119 17z" fill="none" stroke="#111" strokeWidth="1.600" /></Art></Slot>
          <Slot $w={48}><Line w={24} h={17} box="0 0 24 17" sw={1.700}><rect x=".8" y=".8" width="22.400" height="15.400" rx="2" /><path d="M5 5h.1M9.500 5h.1M14 5h.1M18.500 5h.1M7.500 9h.1M12 9h.1M16.500 9h.1M5.500 12.800h13" /></Line></Slot>
          <TrayText $w={66}>ENG<br />US</TrayText>
          <Slot $w={48}><Line w={24} h={18} box="0 0 24 18" sw={1.900}><path d="M1 6c6-6.500 16-6.500 22 0M4.500 9.500c4-4.500 11-4.500 15 0M8 13c2-2.500 6-2.500 8 0" /><circle cx="12" cy="15.500" r="1.300" fill="#1c1c1c" /></Line></Slot>
          <Slot $w={24}><Line w={24} h={20} box="0 0 24 20" sw={1.700}><path d="M1 7h4l5-5v16l-5-5H1zM13 7c1.500 2 1.500 4 0 6M16 4c3 4 3 8 0 12" /><path d="M19 1c5 5 5 13 0 18" stroke="#c4c4c4" /></Line></Slot>
          <Slot $w={48}><Line w={24} h={18} box="0 0 24 18" sw={1.700}><path d="M10 3.500h9a2 2 0 012 2V14a2 2 0 01-2 2H6M3.500 9v8" /><path d="M1 4h6v3.500a3 3 0 01-6 0zM2.500 1v3M5.500 1v3M8 7h6v6H7zM22 7.500h1v4h-1z" fill="#1c1c1c" /></Line></Slot>
          <TrayText $w={94} $right>12:48 AM<br />7/24/2024</TrayText>
          <Slot $w={49}><Line w={21} box="0 0 21 21"><path d="M10 1.500c12 1.500 13 17 1.500 18.500C7 20.500 3 18 1 15.500 8 15 12.500 10 10 1.500z" /></Line></Slot>
        </Tray>
      </Taskbar>
    </Screen>
  );
}
